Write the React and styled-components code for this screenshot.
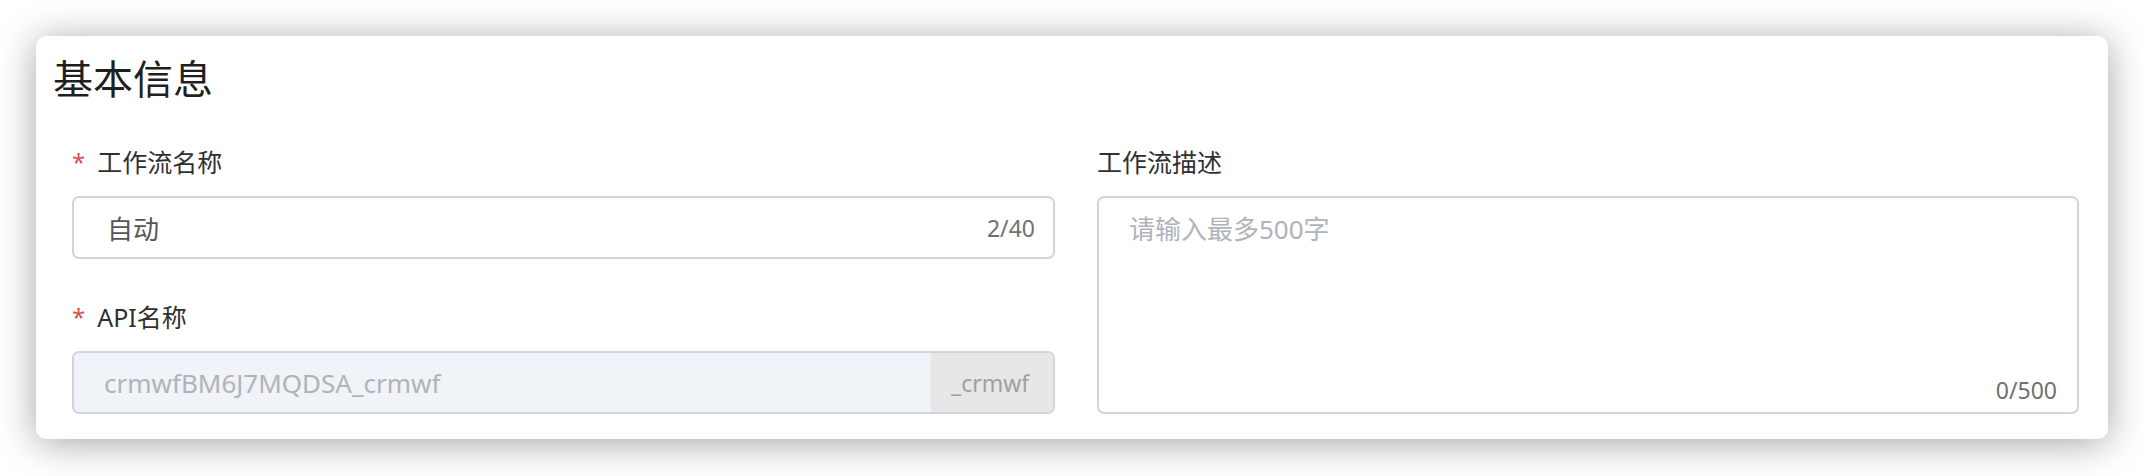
import React from 'react';
import styled, { createGlobalStyle } from 'styled-components';

const GlobalStyle = createGlobalStyle`
  html, body {
    margin: 0;
    padding: 0;
    background: #ffffff;
  }
  body {
    font-family: "Noto Sans", "Noto Sans CJK SC", sans-serif;
  }
`;

const Page = styled.div`
  width: 2144px;
  height: 476px;
  padding: 36px 36px 0 36px;
  box-sizing: border-box;
`;

const Card = styled.section`
  background: #ffffff;
  border-radius: 10px;
  box-shadow: 0 4px 38px rgba(0, 0, 0, 0.36);
  padding: 16px 29px 22px 17px;
  height: 403px;
  box-sizing: border-box;
`;

const Title = styled.h2`
  margin: 0;
  font-size: 40px;
  line-height: 54px;
  font-weight: 400;
  color: #1f1f1f;
`;

const Grid = styled.div`
  display: grid;
  grid-template-columns: 983px 982px;
  column-gap: 42px;
  margin: 39px 0 0 19px;
`;

const Column = styled.div`
  display: flex;
  flex-direction: column;
  gap: 41px;
`;

const Field = styled.div`
  display: flex;
  flex-direction: column;
  gap: 17px;
  flex: ${p => (p.$grow ? 1 : 'none')};
`;

const Label = styled.label`
  display: flex;
  align-items: center;
  font-size: 25px;
  line-height: 34px;
  color: #303030;
`;

const Star = styled.span`
  color: #d9534f;
  font-size: 24px;
  margin-right: 12px;
`;

const InputBox = styled.div`
  display: flex;
  align-items: center;
  height: 63px;
  box-sizing: border-box;
  border: 2px solid #d1d4df;
  border-radius: 7px;
  background: ${p => (p.$disabled ? '#f0f3f8' : '#ffffff')};
  overflow: hidden;
`;

const Value = styled.span`
  flex: 1;
  padding-left: ${p => (p.$pad || 33)}px;
  font-size: 26px;
  color: ${p => (p.$muted ? '#b0b3bb' : '#555555')};
`;

const Counter = styled.span`
  font-size: 23px;
  color: #707070;
  padding-right: 18px;
`;

const Suffix = styled.span`
  flex: none;
  align-self: stretch;
  display: flex;
  align-items: center;
  width: 124px;
  padding-left: 20px;
  box-sizing: border-box;
  background: #e7e7e7;
  font-size: 23px;
  color: #a0a0a0;
  margin: -2px -2px -2px 0;
`;

const TextArea = styled.div`
  flex: 1;
  display: flex;
  flex-direction: column;
  justify-content: space-between;
  border: 2px solid #d1d4df;
  border-radius: 7px;
  padding: 11px 20px 6px 30px;
  box-sizing: border-box;
  height: 219px;
`;

const Placeholder = styled.span`
  font-size: 26px;
  color: #b0b3bb;
`;

const AreaCounter = styled.span`
  align-self: flex-end;
  font-size: 23px;
  color: #707070;
`;

export default function App() {
  return (
    <>
      <GlobalStyle />
      <Page>
        <Card>
          <Title>基本信息</Title>
          <Grid>
            <Column>
              <Field>
                <Label><Star>*</Star>工作流名称</Label>
                <InputBox>
                  <Value $pad={33}>自动</Value>
                  <Counter>2/40</Counter>
                </InputBox>
              </Field>
              <Field>
                <Label><Star>*</Star>API名称</Label>
                <InputBox $disabled>
                  <Value $muted $pad={30}>crmwfBM6J7MQDSA_crmwf</Value>
                  <Suffix>_crmwf</Suffix>
                </InputBox>
              </Field>
            </Column>
            <Column>
              <Field $grow>
                <Label>工作流描述</Label>
                <TextArea>
                  <Placeholder>请输入最多500字</Placeholder>
                  <AreaCounter>0/500</AreaCounter>
                </TextArea>
              </Field>
            </Column>
          </Grid>
        </Card>
      </Page>
    </>
  );
}
